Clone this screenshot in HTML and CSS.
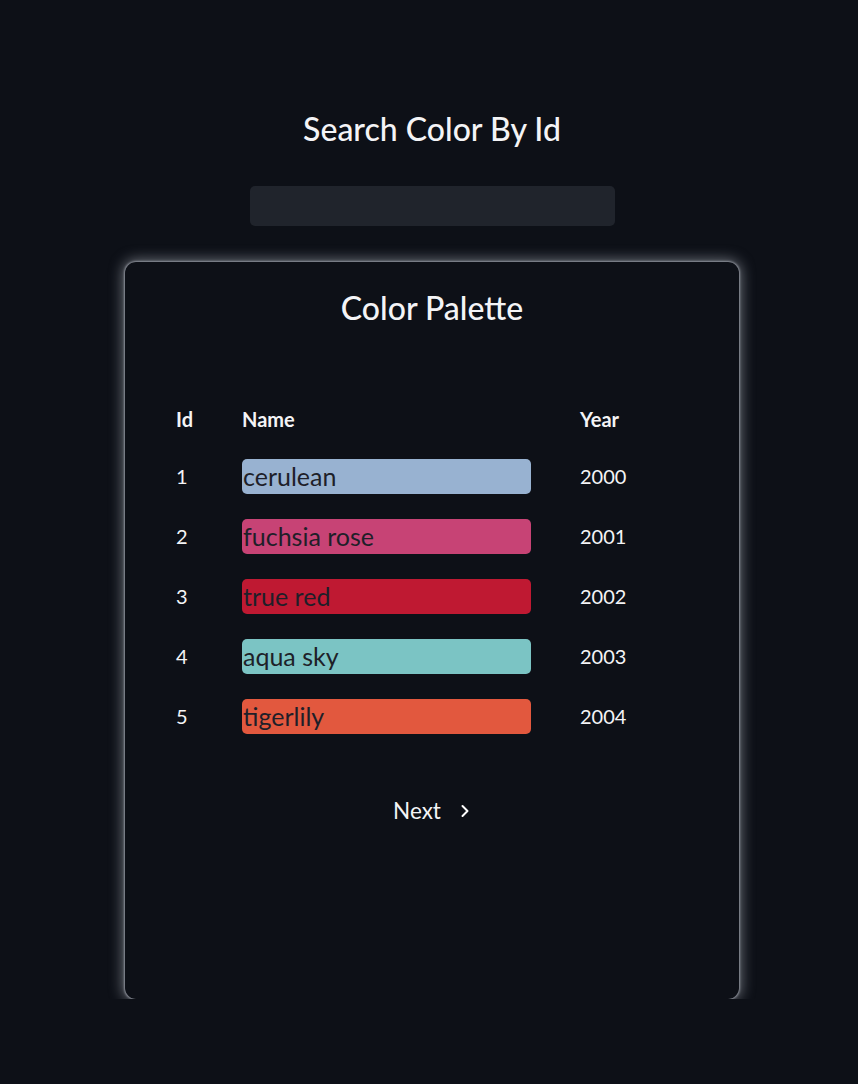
FILE: index.html
```html
<!DOCTYPE html>
<html lang="en">
<head>
<meta charset="utf-8">
<title>Color Palette</title>
<link rel="stylesheet" href="styles.css">
</head>
<body>
<main class="page">
  <h1 class="search-title">Search Color By Id</h1>
  <input class="search-input" type="text" aria-label="Search by id">
  <section class="card">
    <h2 class="card-title">Color Palette</h2>
    <div class="table">
      <div class="row head">
        <div>Id</div><div>Name</div><div>Year</div>
      </div>
      <div class="row">
        <div>1</div><div><span class="bar" style="background:#98B2D1">cerulean</span></div><div>2000</div>
      </div>
      <div class="row">
        <div>2</div><div><span class="bar" style="background:#C74375">fuchsia rose</span></div><div>2001</div>
      </div>
      <div class="row">
        <div>3</div><div><span class="bar" style="background:#BF1932">true red</span></div><div>2002</div>
      </div>
      <div class="row">
        <div>4</div><div><span class="bar" style="background:#7BC4C4">aqua sky</span></div><div>2003</div>
      </div>
      <div class="row">
        <div>5</div><div><span class="bar" style="background:#E2583E">tigerlily</span></div><div>2004</div>
      </div>
    </div>
    <button class="next" type="button">Next
      <svg class="chev" width="12" height="14" viewBox="0 0 12 14" aria-hidden="true"><polyline points="3.5,2 8.5,7 3.5,12" fill="none" stroke="#fff" stroke-width="2" stroke-linecap="round" stroke-linejoin="round"/></svg>
    </button>
  </section>
</main>
</body>
</html>
```
FILE: styles.css
```css
html, body {
  margin: 0;
  background: #0d1017;
}
body {
  font-family: Lato, "Noto Sans", sans-serif;
  color: #f4f4f6;
}
.page {
  display: flex;
  flex-direction: column;
  align-items: center;
  padding: 110px 0 0 6px;
}
.search-title {
  margin: 0;
  font-size: 32px;
  line-height: 38px;
  font-weight: 500;
}
.search-input {
  margin-top: 38px;
  width: 365px;
  height: 40px;
  box-sizing: border-box;
  border: none;
  border-radius: 5px;
  background: #20242c;
  outline: none;
}
.card {
  margin-top: 36px;
  width: 614px;
  height: 737px;
  box-sizing: border-box;
  border-radius: 11px;
  box-shadow: 0 0 2px 1px rgba(150,155,165,0.85), 0 0 14px 2px rgba(175,180,190,0.6);
  padding: 27px 51px 0;
  display: flex;
  flex-direction: column;
  align-items: center;
}
.card-title {
  margin: 0;
  font-size: 32px;
  line-height: 38px;
  font-weight: 500;
}
.table {
  margin-top: 72px;
  width: 100%;
}
.row {
  display: grid;
  grid-template-columns: 66px 338px 1fr;
  align-items: center;
  height: 60px;
  font-size: 20px;
}
.row.head {
  height: 40px;
  margin-bottom: 7px;
  font-weight: 700;
  font-size: 20px;
}
.bar {
  display: flex;
  align-items: center;
  width: 289px;
  height: 35px;
  box-sizing: border-box;
  padding-left: 1px;
  border-radius: 5px;
  color: #1e1f29;
  font-size: 25px;
}
.next {
  margin-top: 50px;
  background: none;
  border: none;
  color: #f4f4f6;
  font-family: inherit;
  font-size: 22.5px;
  line-height: 30px;
  display: flex;
  align-items: center;
  gap: 18px;
  padding: 0;
}
.chev {
  display: block;
}
```
